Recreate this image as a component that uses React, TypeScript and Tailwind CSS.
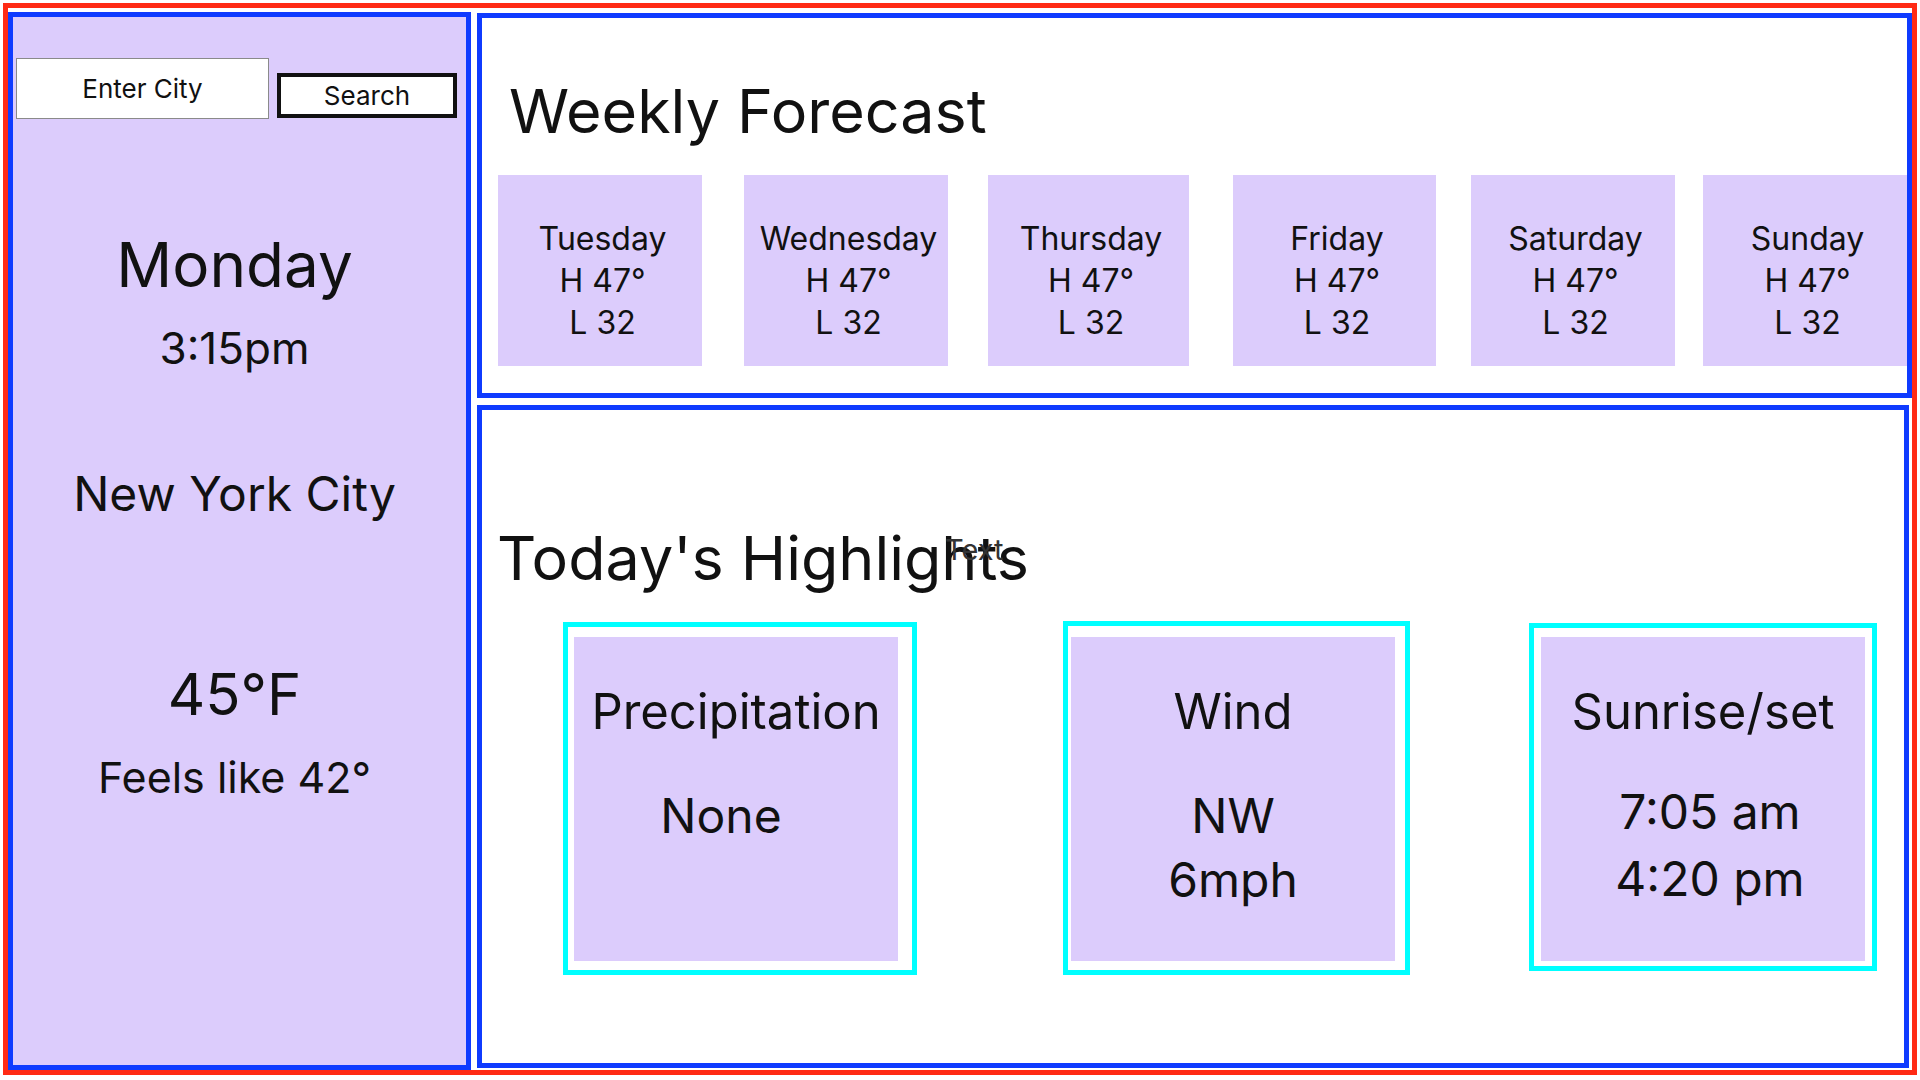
import React from 'react';

// Weather dashboard wireframe · left "now" panel, weekly strip, highlight cards.

const FONT = { fontFamily: 'Inter, "Open Sans", sans-serif' };

const week = [
  { day: 'Tuesday', ml: '', w: 'w-[204px]' },
  { day: 'Wednesday', ml: 'ml-[42px]', w: 'w-[204px]' },
  { day: 'Thursday', ml: 'ml-[40px]', w: 'w-[201px]' },
  { day: 'Friday', ml: 'ml-[44px]', w: 'w-[203px]' },
  { day: 'Saturday', ml: 'ml-[35px]', w: 'w-[204px]' },
  { day: 'Sunday', ml: 'ml-[28px]', w: 'w-[204px]' },
];

function DayCard({ day, ml, w }: { day: string; ml: string; w: string }) {
  return (
    <div className={`${ml} ${w} h-[191px] shrink-0 bg-[#dcccfc] pl-[5px] pt-[43px] text-center text-[32px] leading-[42px] text-[#111]`}>
      <div>{day}</div>
      <div>H 47°</div>
      <div>L 32</div>
    </div>
  );
}

interface HighlightProps {
  title: string;
  lines: string[];
  box: string;
  valueGap: string;
  valueLeading: string;
  valueShift?: string;
}

function Highlight({ title, lines, box, valueGap, valueLeading, valueShift = '' }: HighlightProps) {
  return (
    <div className={`${box} shrink-0 border-[5px] border-[#00ffff] bg-white`}>
      <div className="h-[324px] w-[324px] bg-[#dcccfc] pt-[51px] text-center text-[#111]">
        <div className="text-[49px] leading-[48px]">{title}</div>
        <div className={`${valueGap} ${valueLeading} ${valueShift} text-[48px]`}>
          {lines.map((l) => (
            <div key={l}>{l}</div>
          ))}
        </div>
      </div>
    </div>
  );
}

export default function App() {
  return (
    <div className="h-[1080px] w-[1920px] overflow-hidden bg-white" style={FONT}>
      <div className="ml-[3px] mt-[3px] flex h-[1072px] w-[1914px] border-[5px] border-[#ff2b14]">
        {/* left: search + current conditions */}
        <aside className="mt-[4px] flex h-[1058px] w-[463px] shrink-0 flex-col border-[5px] border-[#0f3bff] bg-[#dcccfc] text-[#111]">
          <div className="ml-[3px] mt-[41px] flex items-end">
            <input
              placeholder="Enter City"
              className="h-[61px] w-[253px] border border-[#8a8a8a] bg-white text-center text-[26px] text-[#111] outline-none placeholder:text-[#111]"
            />
            <button
              type="button"
              className="mb-[1px] ml-[8px] h-[45px] w-[180px] border-[4px] border-[#111] bg-white text-[26px] leading-none text-[#111]"
            >
              Search
            </button>
          </div>
          <div className="flex flex-col items-center pr-[10px] text-center">
            <div className="mt-[115px] text-[62px] leading-[62px]">Monday</div>
            <div className="mt-[30px] text-[44px] leading-[44px]">3:15pm</div>
            <div className="mt-[100px] text-[48px] leading-[48px]">New York City</div>
            <div className="mt-[147px] text-[58px] leading-[58px]">45°F</div>
            <div className="mt-[33px] text-[43px] leading-[43px]">Feels like 42°</div>
          </div>
        </aside>

        <div className="ml-[6px] flex flex-col">
          {/* weekly forecast */}
          <section className="mt-[5px] h-[385px] w-[1435px] border-[5px] border-[#0f3bff] bg-white">
            <h1 className="ml-[27px] mt-[62px] text-[61px] font-normal leading-[62px] text-[#111]">Weekly Forecast</h1>
            <div className="ml-[16px] mt-[33px] flex">
              {week.map((d) => (
                <DayCard key={d.day} {...d} />
              ))}
            </div>
          </section>

          {/* highlights */}
          <section className="relative mt-[7px] h-[663px] w-[1432px] border-[5px] border-[#0f3bff] bg-white">
            <h2 className="ml-[15px] mt-[117px] text-[61px] font-normal leading-[62px] text-[#111]">Today's Highlights</h2>
            <span className="absolute left-[463px] top-[125px] text-[29px] leading-[29px] text-[#333]">Text</span>
            <div className="mt-[32px] flex items-start">
              <Highlight
                title="Precipitation"
                lines={['None']}
                box="ml-[81px] mt-[1px] w-[354px] pb-[9px] pl-[6px] pt-[10px]"
                valueGap="mt-[48px]"
                valueLeading="leading-[64px]"
                valueShift="pr-[30px]"
              />
              <Highlight
                title="Wind"
                lines={['NW', '6mph']}
                box="ml-[146px] w-[347px] pb-[9px] pl-[3px] pt-[11px]"
                valueGap="mt-[48px]"
                valueLeading="leading-[64px]"
              />
              <Highlight
                title="Sunrise/set"
                lines={['7:05 am', '4:20 pm']}
                box="ml-[119px] mt-[2px] w-[348px] pb-[5px] pl-[7px] pt-[9px]"
                valueGap="mt-[42px]"
                valueLeading="leading-[67px]"
                valueShift="pl-[14px]"
              />
            </div>
          </section>
        </div>
      </div>
    </div>
  );
}
